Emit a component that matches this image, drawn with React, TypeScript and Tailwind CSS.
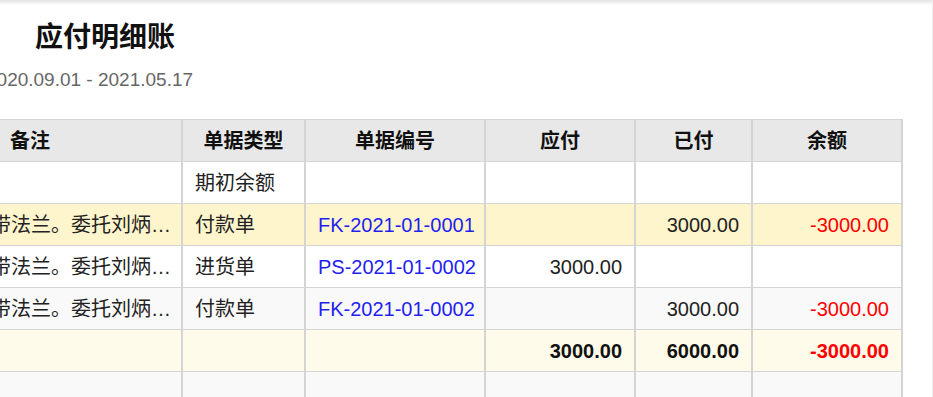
import React from 'react';

interface Row {
  remark: string;
  type: string;
  no: string;
  payable: string;
  paid: string;
  balance: string;
  bg: string;
}

const rows: Row[] = [
  { remark: '', type: '期初余额', no: '', payable: '', paid: '', balance: '', bg: 'bg-white' },
  {
    remark: '不锈钢球阀带法兰。委托刘炳坤采购',
    type: '付款单',
    no: 'FK-2021-01-0001',
    payable: '',
    paid: '3000.00',
    balance: '-3000.00',
    bg: 'bg-[#fff5cc]',
  },
  {
    remark: '不锈钢球阀带法兰。委托刘炳坤采购',
    type: '进货单',
    no: 'PS-2021-01-0002',
    payable: '3000.00',
    paid: '',
    balance: '',
    bg: 'bg-white',
  },
  {
    remark: '不锈钢球阀带法兰。委托刘炳坤采购',
    type: '付款单',
    no: 'FK-2021-01-0002',
    payable: '',
    paid: '3000.00',
    balance: '-3000.00',
    bg: 'bg-[#f9f9f9]',
  },
];

const cell = 'h-[42px] border-x-2 border-y border-[#d4d4d4] px-3 text-[20px] leading-none whitespace-nowrap';

export default function App() {
  return (
    <div
      className="h-[397px] w-[933px] overflow-hidden bg-white border-r border-[#efefef]"
      style={{ fontFamily: '"Liberation Sans", "Noto Sans CJK SC", sans-serif' }}
    >
      <div className="h-[5px] bg-gradient-to-b from-[#e4e4e4] to-white" />
      <h1 className="mt-[15px] ml-[35px] text-[28px] font-bold leading-[36px] text-[#111]">应付明细账</h1>
      <div className="-ml-[14px] mt-[12px] text-[19px] leading-[24px] text-[#666]">2020.09.01 - 2021.05.17</div>
      <table className="-ml-[123px] mt-[27px] w-[1024px] table-fixed border-collapse border-r-2 border-r-[#c8c8c8]">
        <colgroup>
          <col className="w-[304px]" />
          <col className="w-[123px]" />
          <col className="w-[180px]" />
          <col className="w-[150px]" />
          <col className="w-[117px]" />
          <col className="w-[150px]" />
        </colgroup>
        <thead>
          <tr className="bg-[#e8e8e8] text-[#111]">
            {['备注', '单据类型', '单据编号', '应付', '已付', '余额'].map((h) => (
              <th key={h} className={`${cell} text-center font-bold`}>
                {h}
              </th>
            ))}
          </tr>
        </thead>
        <tbody className="text-[#222]">
          {rows.map((r, i) => (
            <tr key={i} className={r.bg}>
              <td className={`${cell} max-w-0 truncate pr-1`}>{r.remark}</td>
              <td className={cell}>{r.type}</td>
              <td className={`${cell} text-[19px] text-[#1f1ff0]`}>{r.no}</td>
              <td className={`${cell} text-right`}>{r.payable}</td>
              <td className={`${cell} text-right`}>{r.paid}</td>
              <td className={`${cell} text-right text-[#ff0000]`}>{r.balance}</td>
            </tr>
          ))}
          <tr className="bg-[#fffbea] font-bold text-[#111]">
            <td className={cell} />
            <td className={cell} />
            <td className={cell} />
            <td className={`${cell} text-right`}>3000.00</td>
            <td className={`${cell} text-right`}>6000.00</td>
            <td className={`${cell} text-right text-[#ff0000]`}>-3000.00</td>
          </tr>
          <tr className="bg-[#f9f9f9]">
            <td className={cell} />
            <td className={cell} />
            <td className={cell} />
            <td className={cell} />
            <td className={cell} />
            <td className={cell} />
          </tr>
        </tbody>
      </table>
    </div>
  );
}
